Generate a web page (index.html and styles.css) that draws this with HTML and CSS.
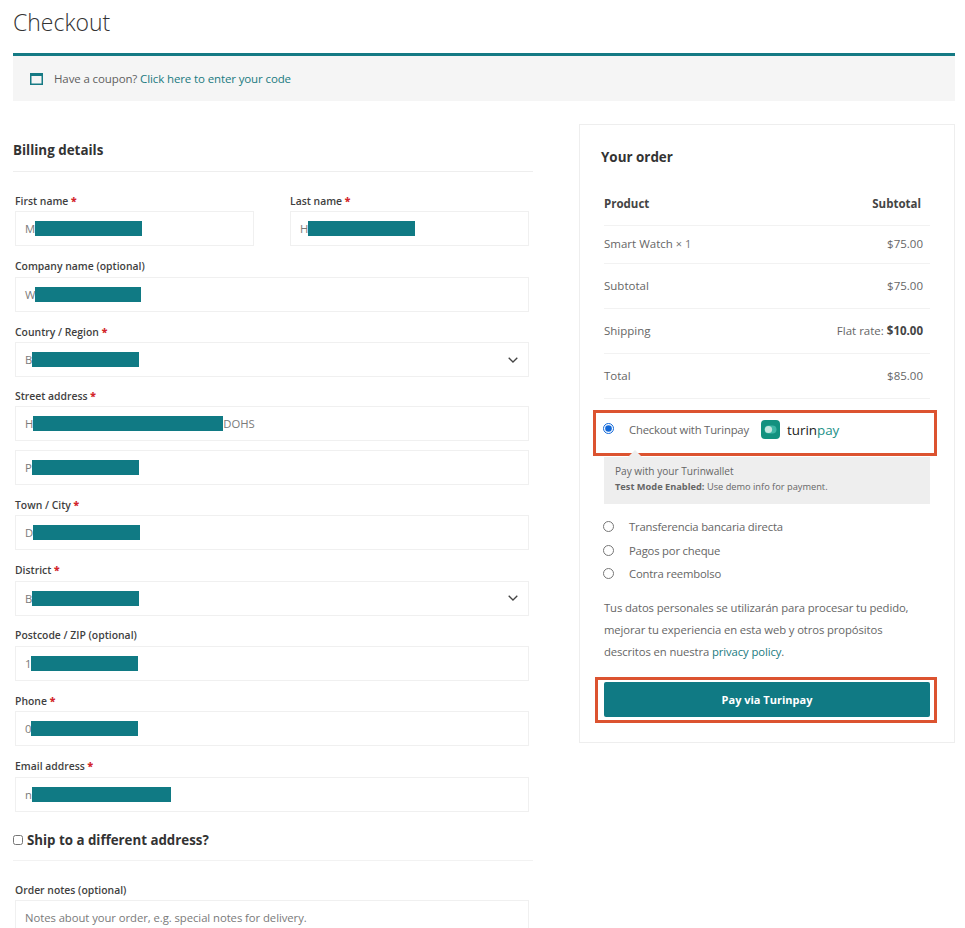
FILE: index.html
```html
<!DOCTYPE html>
<html lang="en">
<head>
<meta charset="utf-8">
<title>Checkout</title>
<link rel="stylesheet" href="styles.css">
</head>
<body>
<main class="page">
  <h1 class="title">Checkout</h1>
  <div class="notice">
    <svg class="notice-icon" width="13" height="12" viewBox="0 0 13 12"><rect x="0.75" y="0.75" width="11.5" height="10.5" fill="none" stroke="#167a84" stroke-width="1.5"/><rect x="0" y="0" width="13" height="3" fill="#167a84"/></svg>
    <span>Have a coupon? <a href="#" class="link">Click here to enter your code</a></span>
  </div>
  <div class="columns">
    <form class="billing">
      <h2 class="section-title">Billing details</h2>
      <div class="fields">
        <div class="two">
          <div class="field"><label class="label">First name <b class="req">*</b></label><div class="input">M<span class="redact" style="width:107px"></span></div></div>
          <div class="field"><label class="label">Last name <b class="req">*</b></label><div class="input">H<span class="redact" style="width:107px"></span></div></div>
        </div>
        <div class="field"><label class="label">Company name (optional)</label><div class="input">W<span class="redact" style="width:106px"></span></div></div>
        <div class="field"><label class="label">Country / Region <b class="req">*</b></label><div class="input select">B<span class="redact" style="width:107px"></span><svg class="chev" width="10" height="6" viewBox="0 0 10 6"><path d="M0.7 0.7 5 5 9.3 0.7" fill="none" stroke="#444" stroke-width="1.3"/></svg></div></div>
        <div class="field street"><label class="label">Street address <b class="req">*</b></label><div class="input">H<span class="redact" style="width:190px"></span>DOHS</div><div class="input second">P<span class="redact" style="width:107px"></span></div></div>
        <div class="field"><label class="label">Town / City <b class="req">*</b></label><div class="input">D<span class="redact" style="width:107px"></span></div></div>
        <div class="field"><label class="label">District <b class="req">*</b></label><div class="input select">B<span class="redact" style="width:107px"></span><svg class="chev" width="10" height="6" viewBox="0 0 10 6"><path d="M0.7 0.7 5 5 9.3 0.7" fill="none" stroke="#444" stroke-width="1.3"/></svg></div></div>
        <div class="field"><label class="label">Postcode / ZIP (optional)</label><div class="input">1<span class="redact" style="width:107px"></span></div></div>
        <div class="field"><label class="label">Phone <b class="req">*</b></label><div class="input">0<span class="redact" style="width:107px"></span></div></div>
        <div class="field"><label class="label">Email address <b class="req">*</b></label><div class="input">n<span class="redact" style="width:139px"></span></div></div>
      </div>
      <h3 class="ship"><input type="checkbox" class="check"> Ship to a different address?</h3>
      <div class="field notes"><label class="label">Order notes (optional)</label><div class="input area">Notes about your order, e.g. special notes for delivery.</div></div>
    </form>
    <aside class="order">
      <h2 class="order-title">Your order</h2>
      <div class="order-table">
        <div class="row head"><span>Product</span><span class="head-sub">Subtotal</span></div>
        <div class="row r1"><span>Smart Watch <small class="qty">× 1</small></span><span>$75.00</span></div>
        <div class="row r2"><span>Subtotal</span><span>$75.00</span></div>
        <div class="row r2"><span>Shipping</span><span>Flat rate: <b class="strong">$10.00</b></span></div>
        <div class="row r2"><span>Total</span><span>$85.00</span></div>
      </div>
      <div class="mark">
        <div class="pay-line first">
          <input type="radio" name="pay" class="radio" checked>
          <span>Checkout with Turinpay</span>
          <span class="logo">
            <svg width="19" height="19" viewBox="0 0 19 19"><rect width="19" height="19" rx="4" fill="#12917f"/><rect x="3.5" y="5.5" width="12" height="8" rx="4" fill="#3fb7a6"/><circle cx="7.5" cy="9.5" r="3.6" fill="#c5e6df"/></svg>
            <span class="logo-text">turin<span class="logo-pay">pay</span></span>
          </span>
        </div>
      </div>
      <div class="pay-box">
        <div>Pay with your Turinwallet</div>
        <div class="test"><b>Test Mode Enabled:</b> Use demo info for payment.</div>
      </div>
      <div class="pay-list">
        <div class="pay-line"><input type="radio" name="pay" class="radio"><span>Transferencia bancaria directa</span></div>
        <div class="pay-line"><input type="radio" name="pay" class="radio"><span>Pagos por cheque</span></div>
        <div class="pay-line"><input type="radio" name="pay" class="radio"><span>Contra reembolso</span></div>
      </div>
      <p class="privacy">Tus datos personales se utilizarán para procesar tu pedido, mejorar tu experiencia en esta web y otros propósitos descritos en nuestra <a href="#" class="link">privacy policy</a>.</p>
      <div class="mark mark-btn"><button type="button" class="pay-btn">Pay via Turinpay</button></div>
    </aside>
  </div>
</main>
</body>
</html>
```

FILE: styles.css
```css
* { box-sizing: border-box; }
html, body { margin: 0; padding: 0; }
body {
  height: 928px;
  overflow: hidden;
  background: #fff;
  color: #555;
  font-family: "Open Sans", "Noto Sans", sans-serif;
  font-size: 12px;
}
.page { padding: 0 10px 0 13px; }
.title {
  margin: 0;
  height: 53px;
  padding-top: 6px;
  font-size: 23px;
  line-height: 32px;
  font-weight: 300;
  color: #333;
}
.link { color: #1a7a80; text-decoration: none; }
.notice {
  display: flex;
  align-items: center;
  gap: 11px;
  height: 48px;
  padding: 0 0 0 17px;
  border-top: 3px solid #147a84;
  background: #f5f5f5;
  color: #5f5f5f;
  font-size: 11.5px;
  letter-spacing: -0.12px;
}
.notice-icon { flex: none; }
.columns {
  display: grid;
  grid-template-columns: 520px 376px;
  gap: 46px;
  margin-top: 23px;
}
.section-title {
  margin: 0;
  height: 48px;
  padding-top: 16px;
  border-bottom: 1px solid #eee;
  font-size: 13.4px;
  line-height: 20px;
  font-weight: 700;
  color: #333;
}
.fields {
  display: flex;
  flex-direction: column;
  gap: 12.9px;
  margin-top: 21.8px;
  padding: 0 4px 0 2px;
}
.two { display: grid; grid-template-columns: 239px 239px; gap: 36px; }
.label {
  display: block;
  height: 14px;
  margin-bottom: 3.5px;
  font-size: 10.4px;
  line-height: 14px;
  font-weight: 600;
  color: #3f3f3f;
}
.req { color: #d3262c; }
.input {
  display: flex;
  align-items: center;
  height: 35px;
  padding-left: 9px;
  border: 1px solid #f0f0f0;
  color: #7a7a7a;
  font-size: 11.3px;
  letter-spacing: -0.06px;
}
.street { margin-top: -1.2px; }
.second { margin-top: 8.5px; }
.chev { margin-left: auto; margin-right: 10px; }
.redact { display: inline-block; height: 15px; background: #107a84; }
.ship {
  display: flex;
  align-items: center;
  gap: 4px;
  height: 49px;
  margin: 0;
  padding-top: 8px;
  border-bottom: 1px solid #f2f2f2;
  font-size: 13.3px;
  font-weight: 700;
  color: #333;
}
.check { width: 10px; height: 10px; margin: 0; }
.notes { margin-top: 22px; padding: 0 4px 0 2px; }
.notes .label { margin-bottom: 3px; }
.area { height: 60px; align-items: flex-start; padding-top: 9px; }
.order {
  height: 619px;
  padding: 22px 24px 0 21px;
  border: 1px solid #eee;
}
.order-title {
  margin: 0 0 22px;
  font-size: 13.4px;
  line-height: 20px;
  font-weight: 700;
  color: #333;
}
.order-table { padding-left: 3px; }
.row {
  display: flex;
  justify-content: space-between;
  align-items: center;
  padding: 0 7px 2px 0;
  border-bottom: 1px solid #f2f2f2;
  color: #666;
  font-size: 11.5px;
}
.head { height: 37px; padding-bottom: 8px; font-weight: 700; color: #444; }
.head-sub { margin-right: 2px; }
.r1 { height: 38px; }
.r2 { height: 45px; }
.qty { font-size: 11px; color: #777; }
.strong { color: #444; }
.mark { margin: 11px -7px 0 -8px; padding: 0 0 0 7px; border: 3px solid #dc5330; height: 46px; }
.pay-line {
  display: flex;
  align-items: center;
  height: 23.5px;
  color: #666;
  font-size: 11.3px;
  letter-spacing: -0.2px;
}
.pay-line.first { height: 33px; }
.radio { width: 11px; height: 11px; margin: 0 15px 2px 0; accent-color: #1268d8; flex: none; }
.logo { display: flex; align-items: center; gap: 7px; margin-left: 12px; letter-spacing: 0; }
.logo-text { font-size: 13.4px; font-weight: 500; color: #222; }
.logo-pay { color: #1b9187; }
.pay-box {
  position: relative;
  height: 47px;
  margin: 1px 0 0 3px;
  padding: 7px 11px 0;
  background: #eeeeee;
  line-height: 15px;
  font-size: 10.1px;
  color: #666;
}
.pay-box::before {
  content: "";
  position: absolute;
  top: -7px;
  left: 24px;
  border: 7px solid transparent;
  border-top: 0;
  border-bottom-color: #eeeeee;
}
.test { font-size: 9.25px; line-height: 15px; }
.pay-list { margin: 11px 0 0 2px; }
.pay-list .radio { margin-bottom: 0; }
.privacy {
  margin: 11px 0 0 3px;
  line-height: 22px;
  font-size: 11.3px;
  letter-spacing: -0.11px;
  color: #666;
}
.mark-btn { height: 46px; margin: 14px -7px 0 -6px; padding: 2px 4px 0 6px; }
.pay-btn {
  display: block;
  width: 100%;
  height: 35px;
  border: 0;
  border-radius: 2px;
  background: #107a84;
  color: #fff;
  font: 700 11px "Open Sans", "Noto Sans", sans-serif;
}
```
